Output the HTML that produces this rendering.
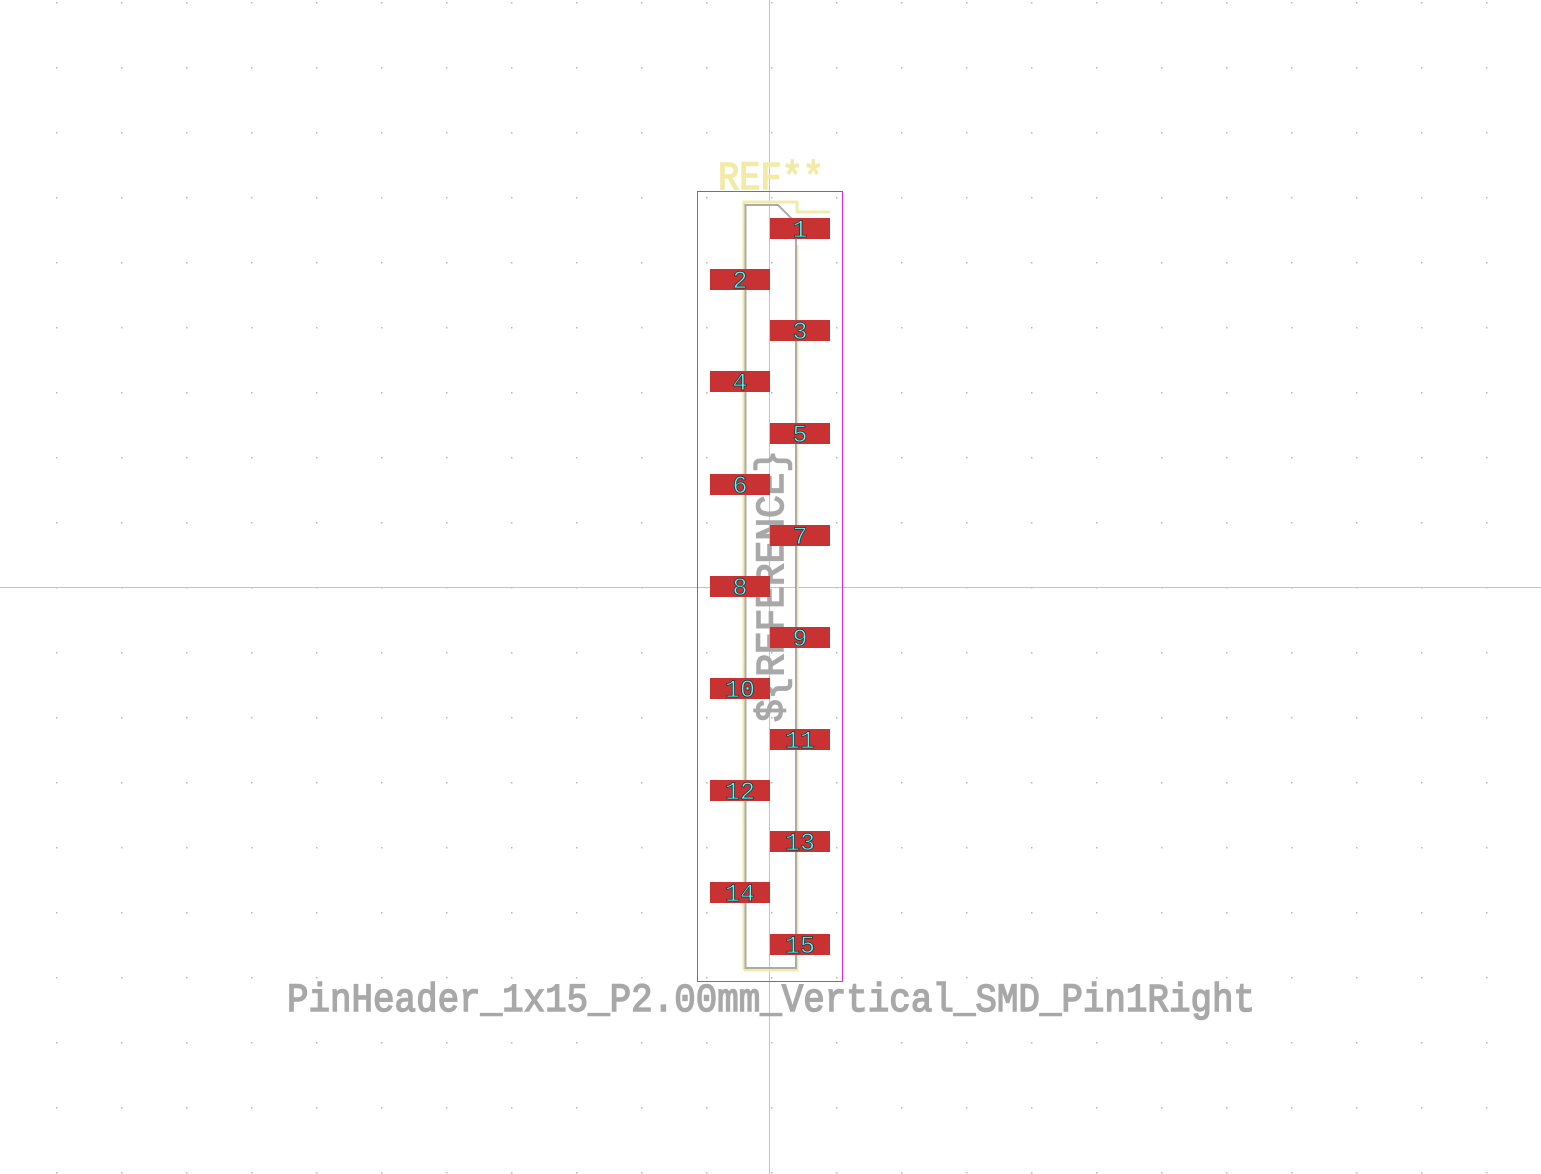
<!DOCTYPE html>
<html><head><meta charset="utf-8"><style>html,body{margin:0;padding:0;background:#fff;width:1541px;height:1174px;overflow:hidden}</style></head>
<body>
<svg width="1541" height="1174" xmlns="http://www.w3.org/2000/svg">
<defs><pattern id="g" x="56" y="2" width="65" height="65" patternUnits="userSpaceOnUse"><rect x="0" y="0" width="1.5" height="1.5" fill="#b8b8b8"/></pattern></defs>
<rect width="1541" height="1174" fill="#fff"/>
<rect width="1541" height="1174" fill="url(#g)"/>
<line x1="769.5" y1="0" x2="769.5" y2="1174" stroke="#c4c4c4" stroke-width="1"/>
<line x1="0" y1="587.5" x2="1541" y2="587.5" stroke="#c4c4c4" stroke-width="1"/>
<!-- silk -->
<path d="M744 970 V202 H797 V212 H830 M797 245 V970 H744" fill="none" stroke="#f2eba8" stroke-width="3"/>
<!-- fab -->
<path d="M745.5 968 V205 H778 L796 223 V968 Z" fill="none" stroke="#ababab" stroke-width="2"/>
<rect x="697.5" y="191.5" width="145" height="790" fill="none" stroke="#f21cf2" stroke-width="1"/>
<text x="771" y="189" font-family="Liberation Mono, monospace" font-size="40" fill="#f2eba8" stroke="#f2eba8" stroke-width="1.5" text-anchor="middle" textLength="106" lengthAdjust="spacingAndGlyphs">REF**</text>
<text transform="translate(783,586) rotate(-90)" font-family="Liberation Mono, monospace" font-size="40" fill="#a8a8a8" stroke="#a8a8a8" stroke-width="1.5" text-anchor="middle" textLength="272" lengthAdjust="spacingAndGlyphs">${REFERENCE}</text>
<text x="771" y="1011" font-family="Liberation Mono, monospace" font-size="40" fill="#a8a8a8" stroke="#a8a8a8" stroke-width="1.5" text-anchor="middle" textLength="968" lengthAdjust="spacingAndGlyphs">PinHeader_1x15_P2.00mm_Vertical_SMD_Pin1Right</text>
<g fill="#c83232">
<rect x="770" y="218" width="60" height="21"/><rect x="710" y="269" width="60" height="21"/>
<rect x="770" y="320" width="60" height="21"/><rect x="710" y="371" width="60" height="21"/>
<rect x="770" y="423" width="60" height="21"/><rect x="710" y="474" width="60" height="21"/>
<rect x="770" y="525" width="60" height="21"/><rect x="710" y="576" width="60" height="21"/>
<rect x="770" y="627" width="60" height="21"/><rect x="710" y="678" width="60" height="21"/>
<rect x="770" y="729" width="60" height="21"/><rect x="710" y="780" width="60" height="21"/>
<rect x="770" y="831" width="60" height="21"/><rect x="710" y="882" width="60" height="21"/>
<rect x="770" y="934" width="60" height="21"/>
</g>
<g font-family="Liberation Mono, monospace" font-size="25" fill="#5ff" stroke="#033" stroke-width="0.7" text-anchor="middle">
<text x="800" y="237">1</text><text x="740" y="288">2</text>
<text x="800" y="339">3</text><text x="740" y="390">4</text>
<text x="800" y="442">5</text><text x="740" y="493">6</text>
<text x="800" y="544">7</text><text x="740" y="595">8</text>
<text x="800" y="646">9</text><text x="740" y="697">10</text>
<text x="800" y="748">11</text><text x="740" y="799">12</text>
<text x="800" y="850">13</text><text x="740" y="901">14</text>
<text x="800" y="953">15</text>
</g>
</svg>
</body></html>
